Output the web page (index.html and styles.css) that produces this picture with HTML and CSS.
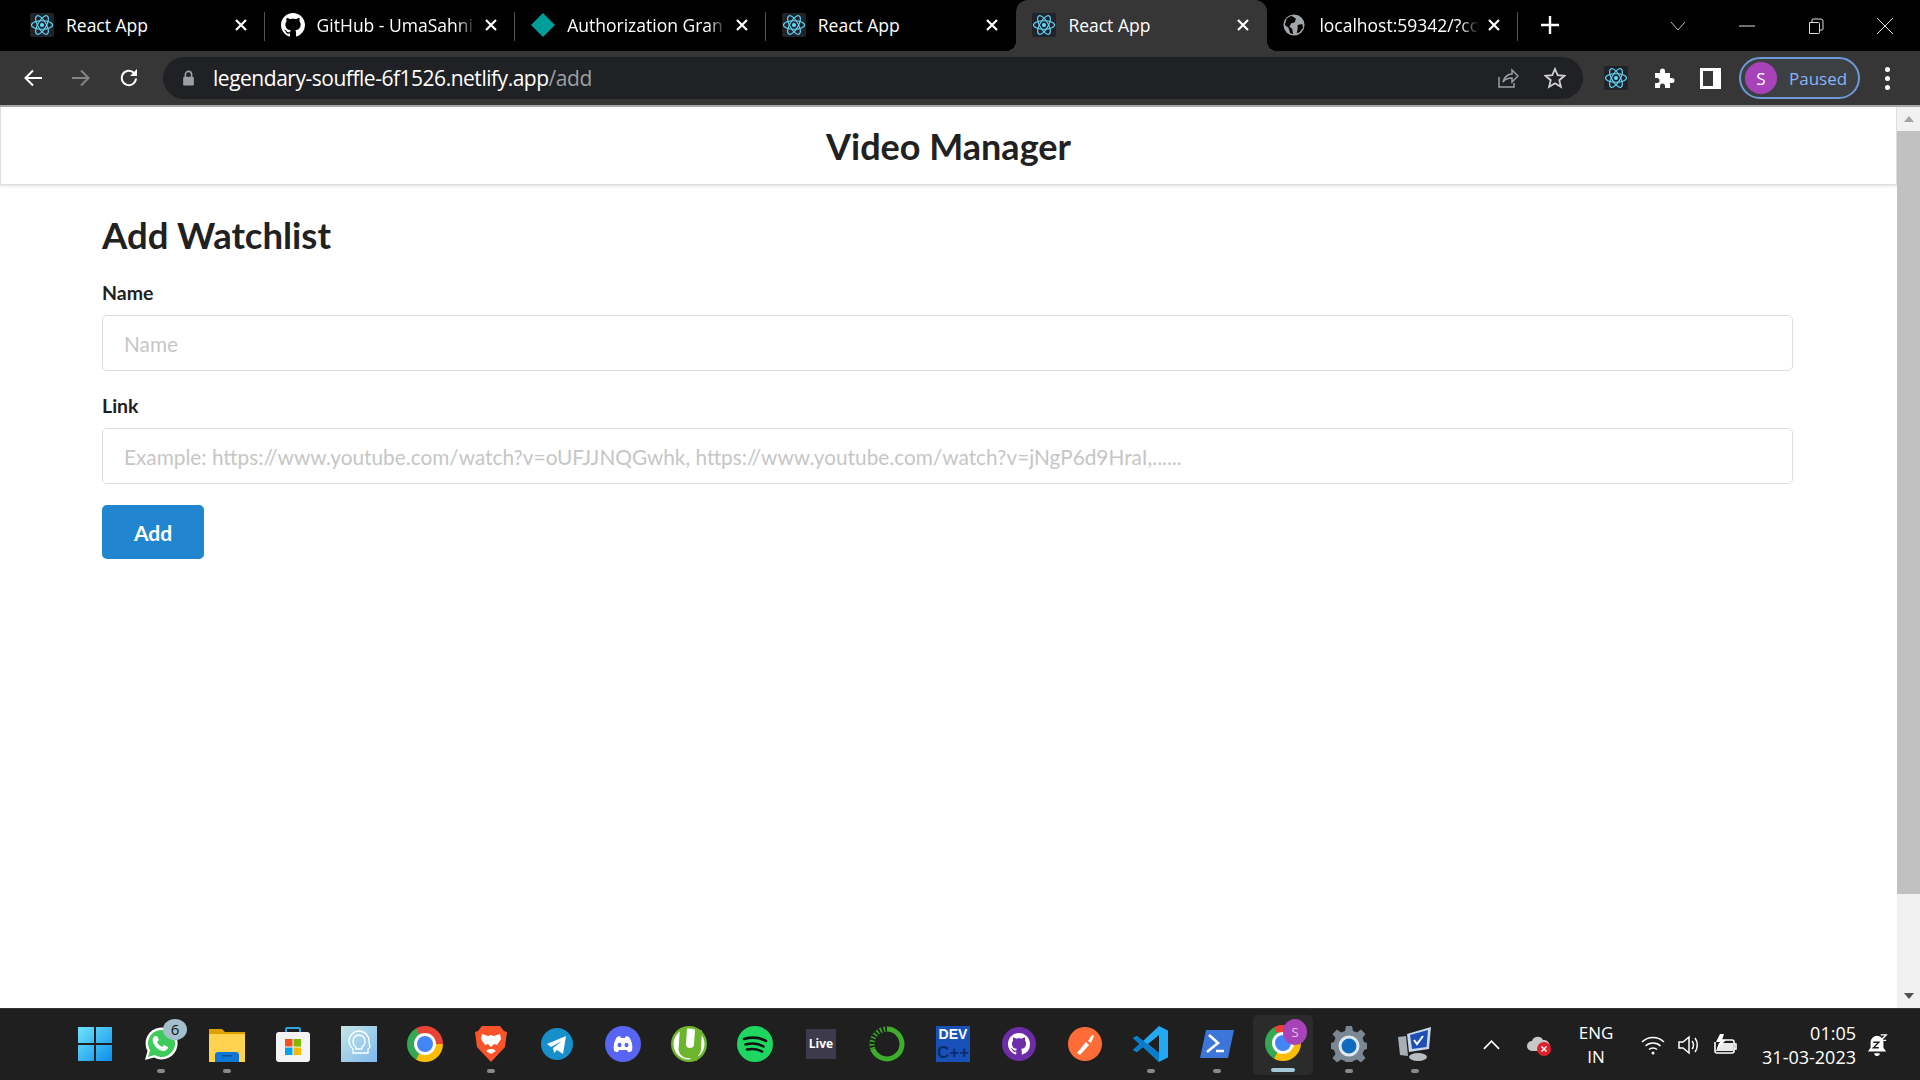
FILE: index.html
```html
<!DOCTYPE html>
<html lang="en">
<head>
    <meta charset="UTF-8">
    <meta name="viewport" content="width=device-width, initial-scale=1.0">
    <title>Video Manager</title>
    <link rel="stylesheet" href="styles.css">
</head>
<body>
    <svg class="defs" width="0" height="0">
        <symbol id="react" viewBox="0 0 24 24">
            <rect width="24" height="24" rx="2" fill="#20232a"/>
            <g fill="none" stroke="#61dafb" stroke-width="1.1">
                <ellipse cx="12" cy="12" rx="10.5" ry="4.2"/>
                <ellipse cx="12" cy="12" rx="10.5" ry="4.2" transform="rotate(60 12 12)"/>
                <ellipse cx="12" cy="12" rx="10.5" ry="4.2" transform="rotate(120 12 12)"/>
            </g>
            <circle cx="12" cy="12" r="2.1" fill="#61dafb"/>
        </symbol>
        <symbol id="close" viewBox="0 0 14 14">
            <path d="M2 2l10 10M12 2L2 12" stroke="#fff" stroke-width="2.2" fill="none"/>
        </symbol>
        <symbol id="octo" viewBox="0 0 16 16">
            <path fill-rule="evenodd" d="M8 0C3.58 0 0 3.58 0 8c0 3.54 2.29 6.53 5.47 7.59.4.07.55-.17.55-.38 0-.19-.01-.82-.01-1.49-2.01.37-2.53-.49-2.69-.94-.09-.23-.48-.94-.82-1.13-.28-.15-.68-.52-.01-.53.63-.01 1.08.58 1.23.82.72 1.21 1.87.87 2.33.66.07-.52.28-.87.51-1.07-1.78-.2-3.64-.89-3.64-3.95 0-.87.31-1.59.82-2.15-.08-.2-.36-1.02.08-2.12 0 0 .67-.21 2.2.82.64-.18 1.32-.27 2-.27.68 0 1.36.09 2 .27 1.53-1.04 2.2-.82 2.2-.82.44 1.1.16 1.92.08 2.12.51.56.82 1.27.82 2.15 0 3.07-1.87 3.75-3.65 3.95.29.25.54.73.54 1.48 0 1.07-.01 1.93-.01 2.2 0 .21.15.46.55.38A8.013 8.013 0 0016 8c0-4.42-3.58-8-8-8z"/>
        </symbol>
    </svg>

    <div class="tabstrip">
        <div class="tab">
            <svg class="favicon"><use href="#react"/></svg>
            <span class="tab-title">React App</span>
            <svg class="tab-close"><use href="#close"/></svg>
        </div>
        <div class="tab">
            <svg class="favicon octo-white"><use href="#octo"/></svg>
            <span class="tab-title fade">GitHub - UmaSahni</span>
            <svg class="tab-close"><use href="#close"/></svg>
        </div>
        <div class="tab">
            <svg class="favicon" viewBox="0 0 24 24"><path d="M12 0l12 12-12 12L0 12z" fill="#009e9a"/></svg>
            <span class="tab-title fade">Authorization Gran</span>
            <svg class="tab-close"><use href="#close"/></svg>
        </div>
        <div class="tab before-active">
            <svg class="favicon"><use href="#react"/></svg>
            <span class="tab-title">React App</span>
            <svg class="tab-close"><use href="#close"/></svg>
        </div>
        <div class="tab active">
            <svg class="favicon"><use href="#react"/></svg>
            <span class="tab-title">React App</span>
            <svg class="tab-close"><use href="#close"/></svg>
        </div>
        <div class="tab">
            <svg class="favicon globe" viewBox="0 0 24 24">
                <circle cx="12" cy="12" r="11.5" fill="#a2a6aa"/>
                <path d="M9 2l5 3-1 4-4 1-2 4 3 2 1 6-3-1-2-6-4-3 2-7zM16 12l5-1 1 4-4 5-3 1 1-5z" fill="#000"/>
            </svg>
            <span class="tab-title fade">localhost:59342/?co</span>
            <svg class="tab-close"><use href="#close"/></svg>
        </div>
        <svg class="new-tab" viewBox="0 0 18 18"><path d="M9 0v18M0 9h18" stroke="#fff" stroke-width="2.4"/></svg>
        <div class="window-btns">
            <svg class="win-icon" viewBox="0 0 16 16"><path d="M1 4l7 8 7-8" fill="none" stroke="#bbb"/></svg>
            <svg class="win-icon" viewBox="0 0 16 16"><path d="M0 8h16" stroke="#ddd"/></svg>
            <svg class="win-icon" viewBox="0 0 16 16"><path d="M1.5 4.5h9a1 1 0 011 1v9a1 1 0 01-1 1h-9z M4 4V2a1 1 0 011-1h8a2 2 0 012 2v8a1 1 0 01-1 1h-2" fill="none" stroke="#ddd"/></svg>
            <svg class="win-icon" viewBox="0 0 16 16"><path d="M0 0l16 16M16 0L0 16" stroke="#ddd"/></svg>
        </div>
    </div>

    <div class="toolbar">
        <svg class="nav-icon" viewBox="0 0 20 20"><path d="M19 10H3M10 2.5L2.5 10l7.500 7.500" fill="none" stroke="#fff" stroke-width="2"/></svg>
        <svg class="nav-icon" viewBox="0 0 20 20"><path d="M1 10h16M10 2.500l7.500 7.500-7.500 7.500" fill="none" stroke="#858585" stroke-width="2"/></svg>
        <svg class="nav-icon" viewBox="0 0 20 20"><path d="M17 10.500a7.200 7.200 0 11-2-5.500" fill="none" stroke="#fff" stroke-width="2"/><path d="M18 1v7h-7z" fill="#fff"/></svg>
        <div class="omnibox">
            <svg class="lock" viewBox="0 0 14 18"><path d="M3.500 8V5a3.500 3.500 0 017 0v3" fill="none" stroke="#9aa0a6" stroke-width="1.800"/><rect x="1" y="7.500" width="12" height="10" rx="1.500" fill="#9aa0a6"/></svg>
            <span class="url">legendary-souffle-6f1526.netlify.app<span class="url-path">/add</span></span>
            <svg class="omni-icon share" viewBox="0 0 22 22"><path d="M2 10v10h15v-4M6 15c1-5 5-8 9-8V3l6 6-6 6v-4c-4 0-7 1-9 4z" fill="none" stroke="#9aa0a6" stroke-width="1.500"/></svg>
            <svg class="omni-icon" viewBox="0 0 22 22"><path d="M11 2l2.700 6.200 6.800.6-5.200 4.400 1.600 6.600L11 16.300l-5.900 3.500 1.600-6.600L1.500 8.800l6.800-.6z" fill="none" stroke="#d0d0d0" stroke-width="1.800"/></svg>
        </div>
        <svg class="ext-react"><use href="#react"/></svg>
        <svg class="ext-puzzle" viewBox="0 0 24 24"><path d="M3 7h5V5a2.500 2.500 0 015 0v2h5v5h2a2.500 2.500 0 010 5h-2v5h-5v-2a2.500 2.500 0 00-5 0v2H3v-5h2a2.500 2.500 0 000-5H3z" fill="#fff"/></svg>
        <div class="side-panel"><span></span></div>
        <div class="profile">
            <span class="avatar">S</span>
            <span class="paused">Paused</span>
        </div>
        <div class="kebab"><i></i><i></i><i></i></div>
    </div>

    <div class="viewport">
        <div class="page">
            <header class="navbar">Video Manager</header>
            <main class="content">
                <h2 class="form-title">Add Watchlist</h2>
                <form id="form-add">
                    <div class="field">
                        <label for="name">Name</label>
                        <input type="text" id="name" placeholder="Name">
                    </div>
                    <div class="field">
                        <label for="link">Link</label>
                        <input type="text" id="link" placeholder="Example: https://www.youtube.com/watch?v=oUFJJNQGwhk, https://www.youtube.com/watch?v=jNgP6d9HraI,......">
                    </div>
                    <button type="submit" class="btn-add">Add</button>
                </form>
            </main>
        </div>
        <div class="scrollbar">
            <span class="arrow-up"></span>
            <div class="track"><div class="thumb"></div></div>
            <span class="arrow-down"></span>
        </div>
    </div>

    <footer class="taskbar">
        <div class="app">
            <svg viewBox="0 0 36 36">
                <defs><linearGradient id="win" x1="0" y1="0" x2="1" y2="1"><stop offset="0" stop-color="#6fe3fb"/><stop offset="1" stop-color="#0b8fea"/></linearGradient></defs>
                <path d="M1 1h16v16H1zM19 1h16v16H19zM1 19h16v16H1zM19 19h16v16H19z" fill="url(#win)"/>
            </svg>
        </div>
        <div class="app running">
            <svg viewBox="0 0 36 36">
                <path d="M2 34l2.500-9A16 16 0 1111 31.500z" fill="#fff"/>
                <path d="M5 31l2-6.500A13.500 13.500 0 1111.500 29z" fill="#3ecb5c"/>
                <path d="M12 10c-2 1-3 3-2 6 2 5 5 8 10 9 3 0 5-2 5-4l-4-2-2 2c-2-1-4-3-5-5l2-2-2-4z" fill="#fff"/>
            </svg>
            <span class="count">6</span>
        </div>
        <div class="app running">
            <svg viewBox="0 0 36 36">
                <path d="M0 3h13l3 3h20v6H0z" fill="#e0a100"/>
                <path d="M0 8h36v28H0z" fill="#ffd34f"/>
                <path d="M6 36v-7a3 3 0 013-3h18a3 3 0 013 3v7z" fill="#0f78d4"/>
                <path d="M13 29h10v1.500H13z" fill="#0a4f92"/>
            </svg>
        </div>
        <div class="app">
            <svg viewBox="0 0 36 36">
                <path d="M11 7V3a1 1 0 011-1h12a1 1 0 011 1v4" fill="none" stroke="#2ba7e0" stroke-width="2"/>
                <rect x="1" y="6" width="34" height="30" rx="3" fill="#f4f4f4"/>
                <path d="M10 13h7.500v7.500H10z" fill="#f25022"/><path d="M18.500 13H26v7.500h-7.500z" fill="#7fba00"/>
                <path d="M10 21.500h7.500V29H10z" fill="#00a4ef"/><path d="M18.500 21.500H26V29h-7.500z" fill="#ffb900"/>
            </svg>
        </div>
        <div class="app">
            <svg viewBox="0 0 36 36">
                <defs><linearGradient id="sq" x1="0" y1="0" x2="1" y2="1"><stop offset="0" stop-color="#c4e6e4"/><stop offset="1" stop-color="#7db8ee"/></linearGradient></defs>
                <rect width="36" height="36" fill="url(#sq)"/>
                <path d="M12 27v-4c-2-2-4-4-4-8a10 10 0 0120 0c0 3 1 5 1 6s-2 1-2 2v4z M15 23v-2c-2-1-3-3-3-6a6 6 0 0112 0c0 3-1 5-3 6v2z" fill="none" stroke="#fff" stroke-width="1.300"/>
            </svg>
        </div>
        <div class="app"><span class="chrome"></span></div>
        <div class="app running">
            <svg viewBox="0 0 36 36">
                <path d="M9 0h18l4 5 3 1-2 15-14 15L4 21 2 6l3-1z" fill="#fb542b"/>
                <path d="M18 28l-5-3 3-2h4l3 2zM9 8l6 2 3-1 3 1 6-2 1 5-4 6-3-1-3 3-3-3-3 1-4-6z" fill="#fff"/>
            </svg>
        </div>
        <div class="app">
            <svg viewBox="0 0 36 36">
                <circle cx="18" cy="18" r="16" fill="#168fcb"/>
                <path d="M8 18l19-8-3 18-6-4-3 3-1-5 9-7-11 6z" fill="#fff"/>
            </svg>
        </div>
        <div class="app">
            <svg viewBox="0 0 36 36">
                <circle cx="18" cy="18" r="18" fill="#5865f2"/>
                <path d="M9 25c-1-5 0-10 3-14l3-1 1 2h4l1-2 3 1c3 4 4 9 3 14-2 1-3 1-4 1l-1-2H14l-1 2c-1 0-2 0-4-1z" fill="#fff"/>
                <ellipse cx="14.500" cy="19" rx="2" ry="2.300" fill="#5865f2"/><ellipse cx="21.500" cy="19" rx="2" ry="2.300" fill="#5865f2"/>
            </svg>
        </div>
        <div class="app">
            <svg viewBox="0 0 36 36">
                <circle cx="18" cy="18" r="18" fill="#6cb52d"/><circle cx="18" cy="18" r="15.500" fill="#fff"/>
                <path d="M9 2h7l-1 16a4 4 0 008 0l1-14h7l-1 20a10 10 0 01-3 6l-1 5h-7l.5-3a10 10 0 01-12-8z" fill="#6cb52d"/>
            </svg>
        </div>
        <div class="app">
            <svg viewBox="0 0 36 36">
                <circle cx="18" cy="18" r="18" fill="#1ed760"/>
                <path d="M7 13c7-2 15-2 22 2M8.500 18.500c6-1.500 13-1 18 2M10 23.500c5-1 11-.5 15 2" fill="none" stroke="#111" stroke-width="2.600" stroke-linecap="round"/>
            </svg>
        </div>
        <div class="app"><span class="live">Live</span></div>
        <div class="app">
            <svg viewBox="0 0 36 36">
                <circle cx="18" cy="18" r="15" fill="none" stroke="#3cae2a" stroke-width="5"/>
                <path d="M18 3A15 15 0 004 23" fill="none" stroke="#1f1f1f" stroke-width="5" stroke-dasharray="2 1.500"/>
            </svg>
        </div>
        <div class="app"><span class="devcpp"><b>DEV</b><b class="cpp">C++</b></span></div>
        <div class="app">
            <svg viewBox="0 0 36 36">
                <circle cx="18" cy="18" r="17" fill="#6e2da8"/>
                <use href="#octo" x="7" y="7" width="22" height="22" fill="#fff"/>
            </svg>
        </div>
        <div class="app">
            <svg viewBox="0 0 36 36">
                <circle cx="18" cy="18" r="17" fill="#ff6c37"/>
                <path d="M10 27l9-11 3 3-9 10zM21 15l4-6 2 1-3 7z" fill="#fff"/>
            </svg>
        </div>
        <div class="app running">
            <svg viewBox="0 0 36 36">
                <path d="M26 0l9 4.500v27L26 36 10 21l-6 5-4-2 6.500-6L0 12l4-2 6 5z" fill="#23a8f2"/>
                <path d="M26 9v18l-11-9z" fill="#1f1f1f"/>
                <path d="M0 12l4-2 22 17v9L10 21l-6 5-4-2 6.500-6z" fill="#0a7ccc"/>
            </svg>
        </div>
        <div class="app running">
            <svg viewBox="0 0 36 36">
                <path d="M7 4h28l-6 28H1z" fill="#3b76d8"/>
                <path d="M10 9l9 8-11 9M17 25h8" fill="none" stroke="#fff" stroke-width="2.600"/>
            </svg>
        </div>
        <div class="app current">
            <span class="chrome"></span>
            <span class="profile-badge">S</span>
        </div>
        <div class="app running">
            <svg viewBox="0 0 36 36">
                <path d="M15 0h6l1 5 4 1.500 4-3 4.500 4.500-3 4 1.500 4 3 1v6l-3 1-1.500 4 3 4-4.500 4.500-4-3-4 1.500-1 3h-6l-1-3-4-1.500-4 3L1.500 32l3-4L3 24l-3-1v-6l3-1 1.500-4-3-4L6 3.500l4 3L14 5z" fill="#7b8894"/>
                <circle cx="18" cy="20" r="9" fill="#0f6cbd" stroke="#dfe6ee" stroke-width="3"/>
            </svg>
        </div>
        <div class="app running">
            <svg viewBox="0 0 36 36">
                <path d="M10 8L34 1l-2 22-20 3z" fill="#c8d6ea"/>
                <path d="M13 9L31 4l-1.500 17L15 23z" fill="#1d4fb5"/>
                <path d="M17 14l3 4 6-8" fill="none" stroke="#fff" stroke-width="2"/>
                <path d="M1 11l8-1 2 20-8-1z" fill="#a8aeb6"/>
                <ellipse cx="21" cy="31" rx="9" ry="4" fill="#b9bec5"/>
            </svg>
        </div>

        <div class="tray">
            <svg class="tray-chevron" viewBox="0 0 18 10"><path d="M1 9l8-8 8 8" fill="none" stroke="#fff" stroke-width="1.800"/></svg>
            <svg class="tray-cloud" viewBox="0 0 26 24">
                <path d="M6 18a5 5 0 010-10 6 6 0 0111-1 5 5 0 012 11z" fill="#c8c8c8"/>
                <circle cx="18" cy="16" r="7" fill="#e0202a"/>
                <path d="M15.500 13.500l5 5M20.500 13.500l-5 5" stroke="#fff" stroke-width="1.500"/>
            </svg>
            <div class="lang">ENG<br>IN</div>
            <svg class="tray-icon" viewBox="0 0 24 24"><path d="M1 9c6-6 16-6 22 0M4.500 13c4-4 11-4 15 0M8 16.500c2.200-2 5.800-2 8 0" fill="none" stroke="#fff" stroke-width="1.500"/><circle cx="12" cy="20" r="1.500" fill="#fff"/></svg>
            <svg class="tray-icon" viewBox="0 0 24 24"><path d="M2 9h4l6-5v16l-6-5H2zM15 8c2 2 2 6 0 8M18 5c3 4 3 10 0 14" fill="none" stroke="#fff" stroke-width="1.500"/></svg>
            <svg class="tray-icon" viewBox="0 0 24 24"><path d="M5 7h14a2 2 0 012 2v9a2 2 0 01-2 2H4a2 2 0 01-2-2V9M21 11h2v5h-2" fill="none" stroke="#fff" stroke-width="1.600"/><path d="M7 1l-4 8h4l-3 7 9-9H9l2-6z" fill="#fff"/><path d="M3 18l3-8h14v8z" fill="#fff" opacity="0.9"/></svg>
            <div class="clock">01:05<br>31-03-2023</div>
            <svg class="tray-bell" viewBox="0 0 24 26">
                <path d="M12 3a7 7 0 00-7 7v6l-3 4h20l-3-4v-6a7 7 0 00-7-7zM9 22a3 3 0 006 0z" fill="#fff"/>
                <path d="M8 10h6l-6 6h6" fill="none" stroke="#1f1f1f" stroke-width="1.500"/>
                <path d="M16 2h6l-6 6h6" fill="none" stroke="#fff" stroke-width="1.500"/>
            </svg>
        </div>
    </footer>
</body>
</html>
```

FILE: styles.css
```css
*{
    box-sizing: border-box;
}
html, body{
    margin: 0;
    height: 100%;
}
body{
    display: flex;
    flex-direction: column;
    overflow: hidden;
    background: #fff;
    font-family: "Open Sans", "Noto Sans", sans-serif;
}
.defs{
    position: absolute;
}

/* tabs */
.tabstrip{
    display: flex;
    align-items: center;
    height: 51px;
    padding-left: 14px;
    background: #000;
    flex-shrink: 0;
}
.tab{
    position: relative;
    display: flex;
    align-items: center;
    align-self: stretch;
    width: 250.600px;
    padding: 0 17px 2px 16px;
    color: #fff;
    font-size: 17.500px;
}
.tab::after{
    content: "";
    position: absolute;
    right: 0;
    top: 12px;
    height: 29px;
    width: 1px;
    background: #555;
}
.tab.before-active::after{
    display: none;
}
.tab.active{
    background: #363636;
    border-radius: 12px 12px 0 0;
    width: 251px;
}
/* flared corners at the foot of the active tab */
.tab.active::before, .tab.active::after{
    content: "";
    position: absolute;
    top: auto;
    bottom: 0;
    width: 10px;
    height: 10px;
    background: radial-gradient(circle at 0 0, #000 10px, #363636 10px);
}
.tab.active::before{
    left: -10px;
}
.tab.active::after{
    right: -10px;
    background: radial-gradient(circle at 100% 0, #000 10px, #363636 10px);
}
.favicon{
    width: 24px;
    height: 24px;
    flex-shrink: 0;
}
.globe{
    width: 22px;
    height: 22px;
    margin-right: 2px;
}
.octo-white{
    fill: #fff;
}
.tab-title{
    flex: 1;
    margin-left: 12px;
    overflow: hidden;
    white-space: nowrap;
}
.fade{
    -webkit-mask-image: linear-gradient(to right, #000 88%, transparent 100%);
    mask-image: linear-gradient(to right, #000 88%, transparent 100%);
}
.tab-close{
    width: 14px;
    height: 14px;
    flex-shrink: 0;
    margin-left: 8px;
}
.new-tab{
    width: 18px;
    height: 18px;
    margin-left: 23px;
    margin-bottom: 2px;
}
.window-btns{
    display: flex;
    align-items: center;
    margin-left: auto;
    padding-right: 27px;
    gap: 53px;
    height: 44px;
}
.win-icon{
    width: 16px;
    height: 16px;
}

/* toolbar */
.toolbar{
    display: flex;
    align-items: center;
    height: 54px;
    background: #363636;
    padding-left: 23px;
    flex-shrink: 0;
}
.nav-icon{
    width: 20px;
    height: 20px;
    margin-right: 28px;
}
.omnibox{
    display: flex;
    align-items: center;
    width: 1420px;
    height: 42px;
    margin-left: -4px;
    padding: 0 17px 0 19px;
    background: #202124;
    border-radius: 21px;
}
.lock{
    width: 13px;
    height: 16px;
}
.url{
    margin-left: 18px;
    color: #fff;
    font-size: 21px;
    letter-spacing: -0.480px;
}
.url-path{
    color: #9aa0a6;
}
.omni-icon{
    width: 22px;
    height: 22px;
}
.share{
    margin-left: auto;
    margin-right: 25px;
}
.ext-react{
    width: 24px;
    height: 24px;
    margin-left: 21px;
}
.ext-puzzle{
    width: 24px;
    height: 24px;
    margin-left: 24px;
}
.side-panel{
    display: flex;
    justify-content: flex-end;
    width: 21px;
    height: 21px;
    margin-left: 24px;
    background: #fff;
    padding: 3px 8px 3px 3px;
}
.side-panel span{
    width: 100%;
    background: #363636;
}
.profile{
    display: flex;
    align-items: center;
    width: 121px;
    height: 42px;
    margin-left: 18px;
    padding-left: 4px;
    background: #3c4043;
    border: 2px solid #6e9ad8;
    border-radius: 21px;
}
.avatar{
    display: flex;
    align-items: center;
    justify-content: center;
    width: 32px;
    height: 32px;
    border-radius: 50%;
    background: #a842b8;
    color: #fff;
    font-size: 17px;
}
.paused{
    margin-left: 12px;
    color: #8ab4f8;
    font-size: 17px;
}
.kebab{
    display: flex;
    flex-direction: column;
    gap: 4px;
    margin-left: 25px;
}
.kebab i{
    width: 5px;
    height: 5px;
    border-radius: 50%;
    background: #fff;
}

/* page */
.viewport{
    flex: 1;
    display: flex;
    min-height: 0;
    border-top: 2px solid #a9a9a9;
}
.page{
    flex: 1;
    min-width: 0;
    color: #212121;
    font-family: Lato, "Open Sans", sans-serif;
}
.navbar{
    height: 78px;
    line-height: 78px;
    text-align: center;
    font-size: 36px;
    font-weight: 700;
    border: 1px solid #dedede;
    border-top: 0;
    box-shadow: 0 1px 3px rgba(34, 36, 38, 0.15);
}
.content{
    padding: 0 104px 0 102px;
}
.form-title{
    margin: 27px 0 0;
    font-size: 36.500px;
    line-height: 46px;
    font-weight: 700;
}
.field{
    margin-top: 23px;
}
.field label{
    display: block;
    margin-bottom: 10px;
    font-size: 19.500px;
    line-height: 24px;
    font-weight: 700;
}
.field input{
    display: block;
    width: 100%;
    height: 56px;
    padding: 0 21px;
    border: 1px solid #dcdddd;
    border-radius: 5px;
    font-family: Lato, "Open Sans", sans-serif;
    font-size: 20.800px;
    outline: none;
}
.field input::placeholder{
    color: #c6c6c6;
}
.btn-add{
    display: block;
    width: 102px;
    height: 54px;
    margin-top: 21px;
    border: 0;
    border-radius: 5px;
    background: #2185d0;
    color: #fff;
    font-family: Lato, "Open Sans", sans-serif;
    font-size: 21px;
    font-weight: 700;
}

/* scrollbar */
.scrollbar{
    display: flex;
    flex-direction: column;
    align-items: center;
    width: 23px;
    background: #f1f1f1;
}
.arrow-up, .arrow-down{
    width: 0;
    height: 0;
    margin: 9px 0;
    border-left: 5px solid transparent;
    border-right: 5px solid transparent;
}
.arrow-up{
    border-bottom: 6px solid #a3a3a3;
}
.arrow-down{
    border-top: 6px solid #505050;
}
.track{
    flex: 1;
    width: 100%;
}
.thumb{
    height: 763px;
    background: #c1c1c1;
}

/* taskbar */
.taskbar{
    display: flex;
    align-items: center;
    height: 72px;
    padding-left: 62px;
    background: #1f1f1f;
    border-top: 1px solid #333;
    flex-shrink: 0;
}
.app{
    position: relative;
    display: flex;
    align-items: center;
    justify-content: center;
    width: 66px;
    height: 60px;
    margin-top: 2px;
    padding-bottom: 3px;
}
.app svg{
    width: 36px;
    height: 36px;
}
.app.running::after, .app.current::after{
    content: "";
    position: absolute;
    bottom: 3px;
    left: 29px;
    width: 8px;
    height: 4px;
    border-radius: 2px;
    background: #8a8a8a;
}
.app.current{
    width: 60px;
    margin: 2px 3px;
    background: #2b2b2b;
    border-radius: 5px;
}
.app.current::after{
    left: 18px;
    width: 24px;
    background: #a5c9d8;
}
.count{
    position: absolute;
    top: 3px;
    right: 7px;
    width: 24px;
    height: 21px;
    border-radius: 50%;
    background: #a3bfcc;
    color: #111;
    font-size: 15px;
    line-height: 21px;
    text-align: center;
}
.chrome{
    position: relative;
    display: block;
    width: 36px;
    height: 36px;
    border-radius: 50%;
    background: conic-gradient(#ea4335 0 90deg, #fbbc04 90deg 210deg, #34a853 210deg 330deg, #ea4335 330deg);
}
.chrome::after{
    content: "";
    position: absolute;
    top: 10px;
    left: 10px;
    width: 16px;
    height: 16px;
    border-radius: 50%;
    background: #4285f4;
    box-shadow: 0 0 0 3px #fff;
}
.profile-badge{
    position: absolute;
    top: 4px;
    right: 6px;
    width: 24px;
    height: 26px;
    border-radius: 50%;
    background: #a842b8;
    color: #e6c4ec;
    font-size: 13px;
    line-height: 26px;
    text-align: center;
}
.live{
    width: 30px;
    height: 30px;
    background: #3d3a4b;
    color: #fff;
    font-size: 12px;
    font-weight: 700;
    line-height: 30px;
    text-align: center;
}
.devcpp{
    display: flex;
    flex-direction: column;
    width: 34px;
    height: 36px;
    background: #1852b8;
    font-family: "Liberation Sans", sans-serif;
    font-size: 14px;
    line-height: 17px;
    text-align: center;
    color: #fff;
    overflow: hidden;
}
.cpp{
    color: #0b2c6c;
    font-size: 17px;
    line-height: 19px;
}
.tray{
    display: flex;
    align-items: center;
    margin-left: 35px;
    color: #fff;
    font-size: 17px;
}
.tray-chevron{
    width: 17px;
    height: 10px;
}
.tray-cloud{
    width: 26px;
    height: 24px;
    margin-left: 26px;
}
.lang{
    width: 60px;
    margin-left: 14px;
    text-align: center;
    line-height: 24px;
}
.tray-icon{
    width: 24px;
    height: 24px;
    margin-left: 12px;
}
.lang + .tray-icon{
    margin-left: 15px;
}
.clock{
    width: 110px;
    margin-left: 9px;
    font-size: 18px;
    line-height: 24px;
    text-align: right;
}
.tray-bell{
    width: 22px;
    height: 24px;
    margin-left: 10px;
}
```
